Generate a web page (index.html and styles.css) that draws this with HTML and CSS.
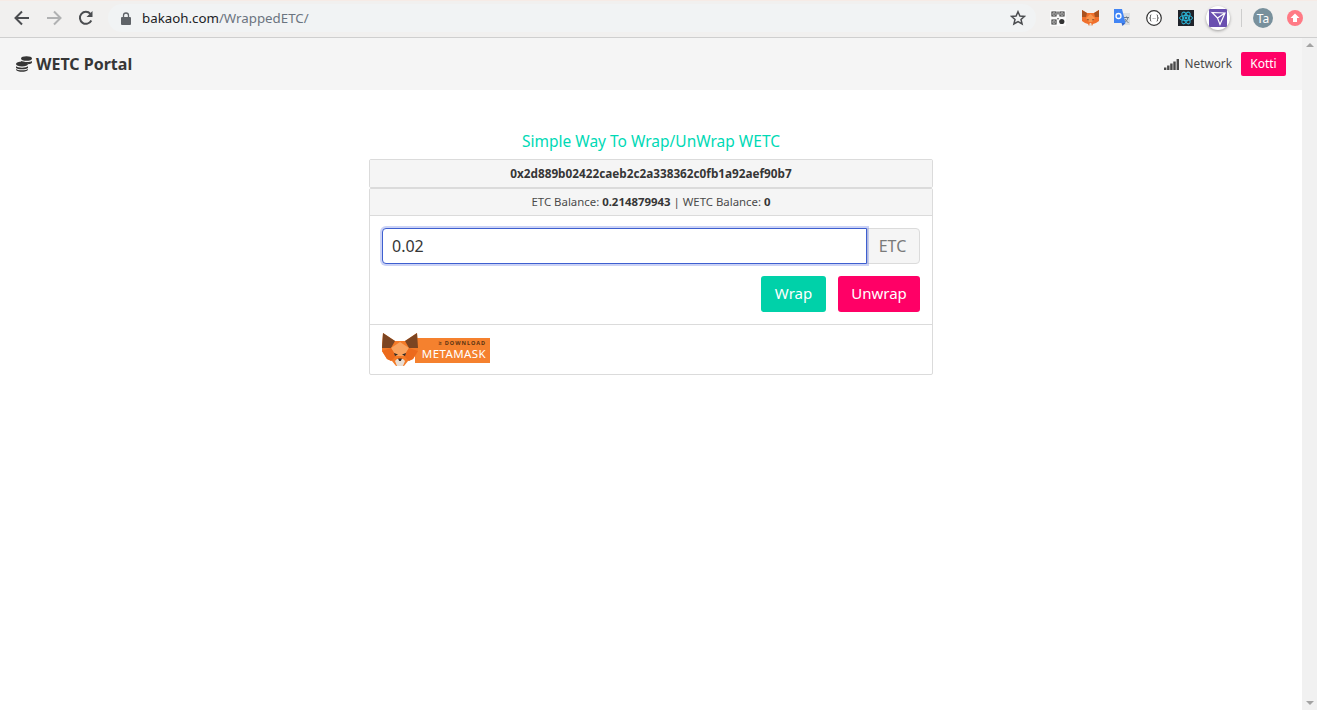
FILE: index.html
```html
<!DOCTYPE html>
<html lang="en">
<head>
<meta charset="utf-8">
<title>WETC Portal</title>
<link rel="stylesheet" href="styles.css">
</head>
<body>
<header class="chrome">
  <span class="nav-btn"><svg width="18" height="18" viewBox="0 0 18 18"><path d="M16 9H3M9 2.500 2.500 9 9 15.500" fill="none" stroke="#4b4d50" stroke-width="2"/></svg></span>
  <span class="nav-btn"><svg width="18" height="18" viewBox="0 0 18 18"><path d="M2 9h13M9 2.500 15.500 9 9 15.500" fill="none" stroke="#b0b1b2" stroke-width="2"/></svg></span>
  <span class="nav-btn"><svg width="18" height="18" viewBox="0 0 18 18"><path d="M14.300 11.500A6 6 0 1 1 13.400 4.800" fill="none" stroke="#4b4d50" stroke-width="2"/><path d="M15.500 2v6h-6z" fill="#4b4d50"/></svg></span>
  <div class="omnibox">
    <svg class="lock" width="10" height="13" viewBox="0 0 10 13"><path d="M2.500 5V3.500a2.500 2.500 0 0 1 5 0V5" fill="none" stroke="#5f6368" stroke-width="1.300"/><rect y="5" width="10" height="8" rx="1" fill="#5f6368"/></svg>
    <span class="url"><span class="url-host">bakaoh.com</span>/WrappedETC/</span>
    <svg class="star" width="16" height="16" viewBox="0 0 16 16"><path d="M8 1.700 9.900 6l4.600.4-3.500 3 1.100 4.600L8 11.600 3.900 14 5 9.400l-3.500-3L6.100 6z" fill="none" stroke="#4b4d50" stroke-width="1.500"/></svg>
  </div>
  <div class="exts">
    <span class="ext"><svg width="16" height="16" viewBox="0 0 16 16"><rect width="16" height="16" fill="#fafafa"/><path d="M2 2h4v4H2zM10 2h4v4h-4zM2 10h4v4H2z" fill="none" stroke="#333" stroke-width="1.100"/><rect x="3.300" y="3.300" width="1.500" height="1.500" fill="#333"/><rect x="7.300" y="1.500" width="1.400" height="3" fill="#555"/><rect x="11.300" y="3.300" width="1.500" height="1.500" fill="#333"/><rect x="3.300" y="11.300" width="1.500" height="1.500" fill="#333"/><rect x="7.300" y="8" width="1.400" height="1.400" fill="#555"/><circle cx="11.800" cy="11.500" r="2.600" fill="#333"/></svg></span>
    <span class="ext"><svg width="17" height="16" viewBox="0 0 17 16"><path d="M0 0 5 3h7l5-3 0 7 0 4-3 2-3 1-1 2H7l-1-2-3-1-3-2 0-4z" fill="#f0702c"/><path d="M0 0 5 3 4 7H0zM17 0 12 3l1 4h4z" fill="#a9521f"/><path d="M8.500 4 4 8l3 4h3l3-4z" fill="#f7964f"/><path d="M7 16l.8-3h1.400l.8 3z" fill="#e8dcd0"/><path d="M5 9l2 .8-1 .8zM12 9l-2 .8 1 .8z" fill="#3c2a20"/></svg></span>
    <span class="ext"><svg width="18" height="18" viewBox="0 0 18 18"><path d="M7 4h10v12H10z" fill="#dcdee0"/><path d="M11 8.500h5M13.500 7.500v1M15 8.500c-.5 2.500-2 4-3.500 5M12 10c.8 1.700 2 2.800 3.500 3.500" stroke="#6b7a88" stroke-width="1" fill="none"/><path d="M1 0h8L12.500 14H1z" fill="#4285f4"/><path d="M9.500 17 8.500 14h4z" fill="#3367c8"/><circle cx="5.500" cy="7" r="2.500" fill="none" stroke="#fff" stroke-width="1.300"/></svg></span>
    <span class="ext"><svg width="16" height="16" viewBox="0 0 16 16"><circle cx="8" cy="8" r="7.300" fill="#fff" stroke="#333" stroke-width="1.200"/><path d="M5.300 4.800c-1.200 0-.8 1.500-.8 2.300 0 .6-.5.9-.9.9.4 0 .9.300.9.900 0 .8-.4 2.300.8 2.300M10.700 4.800c1.200 0 .8 1.500.8 2.300 0 .6.500.9.900.9-.4 0-.9.300-.9.900 0 .8.400 2.300-.8 2.300M6.800 8.500h.6M8.700 8.500h.6" fill="none" stroke="#333" stroke-width=".9"/></svg></span>
    <span class="ext"><svg width="16" height="16" viewBox="0 0 16 16"><rect width="16" height="16" fill="#20232a"/><g fill="none" stroke="#2bb5d8" stroke-width="1"><ellipse cx="8" cy="8" rx="6.500" ry="2.600"/><ellipse cx="8" cy="8" rx="6.500" ry="2.600" transform="rotate(60 8 8)"/><ellipse cx="8" cy="8" rx="6.500" ry="2.600" transform="rotate(120 8 8)"/></g><circle cx="8" cy="8" r="1.400" fill="#2bb5d8"/></svg></span>
    <span class="ext"><span class="ext-ring"><svg width="18" height="18" viewBox="0 0 18 18"><rect width="18" height="18" rx="1" fill="#6a50b0"/><path d="M3 3.500 16 4 11 15.500 8.500 9zM8.500 9 16 4M3.500 3.800l5 5.200" fill="none" stroke="#fff" stroke-width="1.200"/></svg></span></span>
  </div>
  <span class="sep"></span>
  <span class="avatar">Ta</span>
  <span class="update"><svg width="16" height="16" viewBox="0 0 16 16"><circle cx="8" cy="8" r="8" fill="#ff7a85"/><path d="M8 3.500 12.500 8H10v4H6V8H3.500z" fill="#fff"/></svg></span>
</header>
<div class="viewport">
  <div class="page">
    <nav class="navbar">
      <a class="brand"><svg class="coins" width="16" height="16" viewBox="0 0 16 16"><g fill="#363636"><ellipse cx="10.500" cy="2.500" rx="5.500" ry="2.300"/><path d="M5 5c1.500 1.200 9.500 1.500 11 0v1.600c-.5 1-2 1.500-3.500 1.700-1-1.300-4-2-7.500-2.200z"/><ellipse cx="6" cy="8" rx="6" ry="2.400"/><path d="M0 10.300c1.500 1.800 10.500 1.800 12 0V12c-1.500 1.800-10.500 1.800-12 0zM0 13c1.500 1.800 10.500 1.800 12 0v.8c-1.500 2.700-10.500 2.700-12 0z"/></g></svg>WETC Portal</a>
      <div class="nav-right">
        <svg class="signal" width="15" height="11" viewBox="0 0 15 11"><g fill="#4a4a4a"><rect y="8.500" width="2.400" height="2.500"/><rect x="3.100" y="6.500" width="2.400" height="4.500"/><rect x="6.200" y="4.500" width="2.400" height="6.500"/><rect x="9.300" y="2.500" width="2.400" height="8.500"/><rect x="12.600" width="2.400" height="11"/></g></svg>
        <span class="net-label">Network</span>
        <span class="net-tag">Kotti</span>
      </div>
    </nav>
    <main class="content">
      <h1 class="title">Simple Way To Wrap/UnWrap WETC</h1>
      <section class="panel panel-address">
        <div class="address">0x2d889b02422caeb2c2a338362c0fb1a92aef90b7</div>
      </section>
      <section class="panel">
        <div class="balances">ETC Balance: <b>0.214879943</b> | WETC Balance: <b>0</b></div>
        <div class="panel-body">
          <div class="amount-row">
            <input class="amount" type="text" value="0.02">
            <span class="unit">ETC</span>
          </div>
          <div class="actions">
            <button class="btn btn-wrap">Wrap</button>
            <button class="btn btn-unwrap">Unwrap</button>
          </div>
        </div>
        <div class="panel-foot">
          <svg class="mm-logo" width="108" height="34" viewBox="0 0 108 34">
            <rect x="33" y="5" width="75" height="25" fill="#f5812e"/>
            <path d="M1 0 13 8h10L35 0l1 12v6l-5 8-5 2-4 5h-8l-4-5-5-2-5-8v-6z" fill="#f47a27"/>
            <path d="M1 0 13 8 9 15H0zM35 0 23 8l4 7h9z" fill="#7c4522"/>
            <path d="M18 9 9 15l5 8h8l5-8z" fill="#f9a35f"/>
            <path d="M0 18l9-3 5 8-5 5-4-2zM36 18l-9-3-5 8 5 5 4-2z" fill="#ec6a1c"/>
            <path d="M12 20l4 1.500-3 1.500zM24 20l-4 1.500 3 1.500z" fill="#2e2a28"/>
            <path d="M13 28l2-2h6l2 2-2 5h-6z" fill="#e9ddd2"/>
            <path d="M16 25.500h4L18.800 28h-1.600z" fill="#33271f"/>
            <text class="mm-small" x="104" y="12" text-anchor="end">≥ DOWNLOAD</text>
            <text class="mm-big" x="104" y="25" text-anchor="end">METAMASK</text>
          </svg>
        </div>
      </section>
    </main>
  </div>
  <div class="scrollbar"><span class="arrow-up"></span><span class="arrow-down"></span></div>
</div>
</body>
</html>
```
FILE: styles.css
```css
* { box-sizing: border-box; }
html, body { margin: 0; height: 710px; overflow: hidden; background: #fff; }
body { font-family: "Noto Sans", "Open Sans", sans-serif; color: #4a4a4a; display: flex; flex-direction: column; }

.chrome { height: 38px; flex: none; display: flex; align-items: center; padding: 0 0 2px 6px; background: #f1f0ef; border-top: 1px solid #f6ebe6; border-bottom: 1px solid #cfcfcf; }
.nav-btn { width: 32px; height: 32px; display: flex; align-items: center; justify-content: center; }
.omnibox { width: 928px; height: 28px; margin-left: 6px; display: flex; align-items: center; padding: 0 10px 0 13px; border-radius: 14px; background: #f1f3f4; }
.lock { flex: none; }
.url { margin-left: 11px; font-size: 13.3px; color: #6b7480; flex: 1; }
.url-host { color: #202124; }
.exts { display: flex; margin-left: 6px; }
.ext { width: 32px; height: 32px; display: flex; align-items: center; justify-content: center; }
.ext-ring { width: 24px; height: 24px; border-radius: 50%; background: #fff; display: flex; align-items: center; justify-content: center; box-shadow: 0 1px 3px rgba(0,0,0,.35); }
.sep { width: 1px; height: 18px; background: #cdcdcd; margin: 0 11px 0 7px; }
.avatar { width: 20px; height: 20px; border-radius: 50%; background: #78909c; color: #fff; font-size: 12px; display: flex; align-items: center; justify-content: center; }
.update { width: 16px; height: 16px; margin-left: 14px; display: flex; }

.viewport { flex: 1; display: flex; min-height: 0; }
.page { flex: 1; min-width: 0; }
.scrollbar { width: 15px; flex: none; background: #f1f1f1; display: flex; flex-direction: column; justify-content: space-between; align-items: center; padding: 5px 0; }
.arrow-up { width: 0; height: 0; border: 4px solid transparent; border-top: 0; border-bottom: 4px solid #a3a3a3; }
.arrow-down { width: 0; height: 0; border: 4px solid transparent; border-bottom: 0; border-top: 4px solid #a3a3a3; }

.navbar { height: 52px; background: #f5f5f5; display: flex; align-items: center; justify-content: space-between; padding: 0 16px; }
.brand { display: flex; align-items: center; font-weight: 700; font-size: 16px; color: #363636; }
.coins { margin-right: 4px; }
.nav-right { display: flex; align-items: center; }
.signal { margin-right: 6px; }
.net-label { font-size: 11.8px; color: #4a4a4a; line-height: 16px; padding-bottom: 2px; }
.net-tag { margin-left: 9px; width: 45px; height: 24px; padding-bottom: 2px; display: flex; align-items: center; justify-content: center; background: #ff0066; color: #fff; font-size: 12px; border-radius: 2px; }

.content { display: flex; flex-direction: column; align-items: center; padding-top: 40px; }
.title { margin: 0 0 6px; height: 23px; line-height: 23px; font-size: 15.5px; font-weight: 400; color: #00d9b5; }
.panel { width: 564px; border: 1px solid #dbdbdb; border-radius: 2px; }
.panel-address { height: 29px; }
.address { height: 27px; line-height: 27px; text-align: center; font-size: 11.75px; font-weight: 700; background: #f5f5f5; color: #363636; }
.balances { height: 27px; line-height: 25px; text-align: center; font-size: 11.4px; background: #f5f5f5; border-bottom: 1px solid #dbdbdb; }
.balances b { color: #363636; }
.panel-body { padding: 12px; height: 109px; border-bottom: 1px solid #dbdbdb; }
.amount-row { display: flex; height: 36px; }
.amount { width: 485px; height: 36px; padding: 0 9px; border: 1px solid #3e5fd0; border-radius: 4px 0 0 4px; box-shadow: 0 0 0 2px rgba(50,80,220,.25); font: 400 16px "Noto Sans", sans-serif; color: #363636; outline: none; position: relative; z-index: 1; }
.unit { flex: 1; padding-right: 2px; display: flex; align-items: center; justify-content: center; background: #f5f5f5; border: 1px solid #dbdbdb; border-radius: 0 4px 4px 0; color: #7a7a7a; font-size: 16px; }
.actions { display: flex; justify-content: flex-end; gap: 12px; margin-top: 12px; }
.btn { height: 36px; border: 0; border-radius: 3px; color: #fff; font: 400 15px "Noto Sans", sans-serif; padding: 0 0 2px; }
.btn-wrap { width: 65px; background: #00d1a9; }
.btn-unwrap { width: 82px; background: #ff0066; }
.panel-foot { height: 49px; padding: 8px 12px; }
.mm-logo { display: block; }
.mm-small { font: 700 5.5px "Noto Sans", sans-serif; fill: #5c3413; letter-spacing: 1px; }
.mm-big { font: 400 11.5px "Noto Sans", sans-serif; fill: #fff; letter-spacing: .4px; }
```
